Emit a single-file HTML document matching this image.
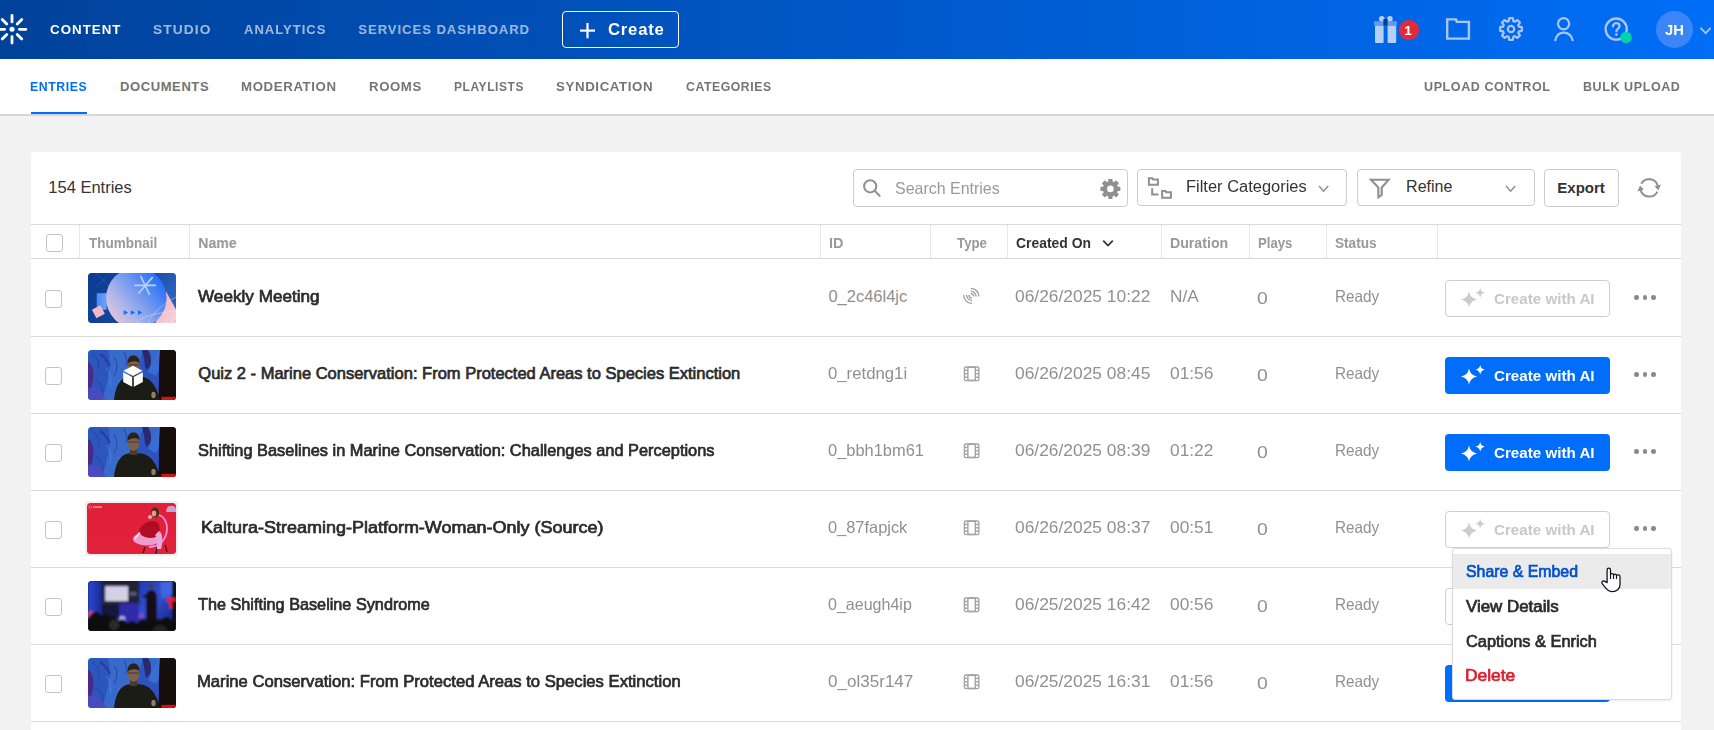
<!DOCTYPE html><html><head><meta charset="utf-8"><title>Entries</title><style>
*{box-sizing:border-box}
html,body{margin:0;padding:0}
body{width:1714px;height:730px;overflow:hidden;position:relative;background:#f2f2f2;font-family:"Liberation Sans",sans-serif}
.t{position:absolute;white-space:nowrap;transform-origin:0 0}
.a{position:absolute}
</style></head><body>
<div class="a" style="left:0;top:0;width:1714px;height:59px;background:linear-gradient(90deg,#00429a 0%,#0058c8 50%,#006ef8 100%)"></div>
<svg class="a" style="left:0;top:0" width="40" height="59"><g stroke="#fff" stroke-width="2.8" stroke-linecap="round"><line x1="19.40" y1="29.30" x2="25.80" y2="29.30"/><line x1="17.23" y1="34.53" x2="21.76" y2="39.06"/><line x1="12.00" y1="36.70" x2="12.00" y2="43.10"/><line x1="6.77" y1="34.53" x2="2.24" y2="39.06"/><line x1="4.60" y1="29.30" x2="-1.80" y2="29.30"/><line x1="6.77" y1="24.07" x2="2.24" y2="19.54"/><line x1="12.00" y1="21.90" x2="12.00" y2="15.50"/><line x1="17.23" y1="24.07" x2="21.76" y2="19.54"/></g><circle cx="12" cy="29.3" r="2.5" fill="#fff"/></svg>
<div class="a" style="left:562px;top:11px;width:117px;height:37px;border:1.4px solid #fff;border-radius:4px"></div>
<svg class="a" style="left:578px;top:21px" width="20" height="20"><g stroke="#fff" stroke-width="2.2"><line x1="2" y1="9.6" x2="17" y2="9.6"/><line x1="9.5" y1="2" x2="9.5" y2="17.3"/></g></svg>
<svg class="a" style="left:1370px;top:12px" width="32" height="34">
<circle cx="11.8" cy="6.9" r="2.8" fill="#b4cff8"/><circle cx="19.9" cy="6.9" r="2.8" fill="#b4cff8"/>
<rect x="4" y="9.3" width="23" height="4.4" rx="1" fill="#5d9cf6"/>
<rect x="5" y="13.7" width="8.6" height="17.3" rx="0.8" fill="#b4cff8"/>
<rect x="17.6" y="13.7" width="8.6" height="17.3" rx="0.8" fill="#b4cff8"/>
<rect x="13.4" y="7" width="4.2" height="6.7" fill="#0b3a8c"/>
</svg>
<div class="a" style="left:1399px;top:20px;width:19.5px;height:19.5px;border-radius:50%;background:#e12a3a"></div>
<svg class="a" style="left:1440px;top:12px" width="36" height="34"><path d="M7.2 7.4 H16 L16.8 9.9 H28.9 V26.6 H7.2 Z" fill="none" stroke="#a9c6f7" stroke-width="2.4" stroke-linejoin="miter"/></svg>
<svg class="a" style="left:1495px;top:13px" width="32" height="32"><path d="M23.84 13.59 L26.85 14.19 L26.85 17.81 L23.84 18.41 L23.25 19.84 L24.95 22.40 L22.40 24.95 L19.84 23.25 L18.41 23.84 L17.81 26.85 L14.19 26.85 L13.59 23.84 L12.16 23.25 L9.60 24.95 L7.05 22.40 L8.75 19.84 L8.16 18.41 L5.15 17.81 L5.15 14.19 L8.16 13.59 L8.75 12.16 L7.05 9.60 L9.60 7.05 L12.16 8.75 L13.59 8.16 L14.19 5.15 L17.81 5.15 L18.41 8.16 L19.84 8.75 L22.40 7.05 L24.95 9.60 L23.25 12.16 Z" fill="none" stroke="#a9c6f7" stroke-width="2.2" stroke-linejoin="round"/><circle cx="16" cy="16" r="3.2" fill="none" stroke="#a9c6f7" stroke-width="2.2"/></svg>
<svg class="a" style="left:1550px;top:13px" width="28" height="30"><circle cx="13.6" cy="10.8" r="5.6" fill="none" stroke="#a9c6f7" stroke-width="2.2"/><path d="M5.3 27.2 C6.5 21.6 9.8 19.6 13.8 19.6 C17.8 19.6 21.1 21.6 22.7 27.2" fill="none" stroke="#a9c6f7" stroke-width="2.2" stroke-linecap="round"/></svg>
<svg class="a" style="left:1600px;top:13px" width="36" height="34"><circle cx="16.2" cy="16.1" r="10.6" fill="none" stroke="#a9c6f7" stroke-width="2.3"/><path d="M12.9 13.4 C12.9 11.2 14.5 10.2 16.3 10.2 C18.2 10.2 19.6 11.4 19.6 13.1 C19.6 15.5 16.4 15.6 16.4 18.3" fill="none" stroke="#a9c6f7" stroke-width="2.2" stroke-linecap="round"/><circle cx="16.4" cy="21.6" r="1.3" fill="#a9c6f7"/><circle cx="26" cy="24.5" r="5.8" fill="#00d4a6"/></svg>
<div class="a" style="left:1656px;top:11px;width:37px;height:37px;border-radius:50%;background:#3b86f6"></div>
<svg class="a" style="left:1696px;top:22px" width="18" height="16"><path d="M4.5 5.8 L9.6 11.2 L14.7 5.8" fill="none" stroke="#a9c6f7" stroke-width="1.8"/></svg>
<div class="a" style="left:0;top:59px;width:1714px;height:55px;background:#fff"></div>
<div class="a" style="left:0;top:114px;width:1714px;height:2px;background:#d7d7d7"></div>
<div class="a" style="left:31px;top:112px;width:56px;height:2px;background:#006efa"></div>
<div class="a" style="left:31px;top:152px;width:1650px;height:600px;background:#fff;border-radius:4px"></div>
<div class="a" style="left:853px;top:169px;width:275px;height:38px;border:1px solid #cccccc;border-radius:4px;background:#fff;"></div>
<div class="a" style="left:1137px;top:169px;width:210px;height:37px;border:1px solid #cccccc;border-radius:4px;background:#fff;"></div>
<div class="a" style="left:1357px;top:169px;width:178px;height:37px;border:1px solid #cccccc;border-radius:4px;background:#fff;"></div>
<div class="a" style="left:1544px;top:169px;width:75px;height:38px;border:1px solid #cccccc;border-radius:4px;background:#fff;"></div>
<svg class="a" style="left:860px;top:176px" width="24" height="24"><circle cx="10.2" cy="10.3" r="6.1" fill="none" stroke="#8f8f8f" stroke-width="2"/><line x1="14.6" y1="14.7" x2="19.6" y2="19.7" stroke="#8f8f8f" stroke-width="2.1" stroke-linecap="round"/></svg>
<svg class="a" style="left:1095px;top:172px" width="32" height="32"><g fill="#8f8f8f"><circle cx="15.4" cy="16.9" r="7.6"/><rect x="13.2" y="6.9" width="4.4" height="4" rx="0.8" transform="rotate(0 15.4 16.9)"/><rect x="13.2" y="6.9" width="4.4" height="4" rx="0.8" transform="rotate(45 15.4 16.9)"/><rect x="13.2" y="6.9" width="4.4" height="4" rx="0.8" transform="rotate(90 15.4 16.9)"/><rect x="13.2" y="6.9" width="4.4" height="4" rx="0.8" transform="rotate(135 15.4 16.9)"/><rect x="13.2" y="6.9" width="4.4" height="4" rx="0.8" transform="rotate(180 15.4 16.9)"/><rect x="13.2" y="6.9" width="4.4" height="4" rx="0.8" transform="rotate(225 15.4 16.9)"/><rect x="13.2" y="6.9" width="4.4" height="4" rx="0.8" transform="rotate(270 15.4 16.9)"/><rect x="13.2" y="6.9" width="4.4" height="4" rx="0.8" transform="rotate(315 15.4 16.9)"/></g><circle cx="15.4" cy="16.9" r="3.3" fill="#fff"/></svg>
<svg class="a" style="left:1140px;top:170px" width="36" height="32"><g fill="none" stroke="#8f8f8f" stroke-width="2"><path d="M8.9 14.8 V8.2 H12.3 L13 9.4 H17.9 V14.8 Z"/><path d="M12.2 18.2 V24.4 H18.5"/><path d="M22.1 27.8 V21.1 H25.5 L26.2 22.3 H30.9 V27.8 Z"/></g></svg>
<svg class="a" style="left:1316px;top:182px" width="16" height="14"><path d="M3 4 L7.6 9.2 L12.2 4" fill="none" stroke="#8f8f8f" stroke-width="1.5"/></svg>
<svg class="a" style="left:1503px;top:182px" width="16" height="14"><path d="M3 4 L7.6 9.2 L12.2 4" fill="none" stroke="#8f8f8f" stroke-width="1.5"/></svg>
<svg class="a" style="left:1366px;top:175px" width="26" height="26"><path d="M5 4.7 H22.6 L15.7 12.6 V20 L12.4 22.2 V12.6 Z" fill="none" stroke="#8f8f8f" stroke-width="2.1" stroke-linejoin="miter"/></svg>
<svg class="a" style="left:1630px;top:170px" width="40" height="35"><g fill="none" stroke="#8f8f8f" stroke-width="2"><path d="M11.25 13.68 A9 9 0 0 1 27.9 16.6"/><path d="M27.4 21.6 A9 9 0 0 1 10.5 19.2"/></g><path d="M24.6 16.2 L30.9 14.4 L28.4 20.2 Z" fill="#8f8f8f"/><path d="M13.8 19.6 L7.5 21.4 L10 15.6 Z" fill="#8f8f8f"/></svg>
<div class="a" style="left:31px;top:224px;width:1650px;height:1px;background:#d9d9d9"></div>
<div class="a" style="left:31px;top:258px;width:1650px;height:1px;background:#d9d9d9"></div>
<div class="a" style="left:79px;top:225px;width:1px;height:33px;background:#e8e8e8"></div>
<div class="a" style="left:189px;top:225px;width:1px;height:33px;background:#e8e8e8"></div>
<div class="a" style="left:820px;top:225px;width:1px;height:33px;background:#e8e8e8"></div>
<div class="a" style="left:930px;top:225px;width:1px;height:33px;background:#e8e8e8"></div>
<div class="a" style="left:1007px;top:225px;width:1px;height:33px;background:#e8e8e8"></div>
<div class="a" style="left:1161px;top:225px;width:1px;height:33px;background:#e8e8e8"></div>
<div class="a" style="left:1249px;top:225px;width:1px;height:33px;background:#e8e8e8"></div>
<div class="a" style="left:1326px;top:225px;width:1px;height:33px;background:#e8e8e8"></div>
<div class="a" style="left:1437px;top:225px;width:1px;height:33px;background:#e8e8e8"></div>
<div class="a" style="left:31px;top:336px;width:1650px;height:1px;background:#d9d9d9"></div>
<div class="a" style="left:31px;top:413px;width:1650px;height:1px;background:#d9d9d9"></div>
<div class="a" style="left:31px;top:490px;width:1650px;height:1px;background:#d9d9d9"></div>
<div class="a" style="left:31px;top:567px;width:1650px;height:1px;background:#d9d9d9"></div>
<div class="a" style="left:31px;top:644px;width:1650px;height:1px;background:#d9d9d9"></div>
<div class="a" style="left:31px;top:721px;width:1650px;height:1px;background:#d9d9d9"></div>
<div class="a" style="left:46px;top:234px;width:17px;height:18px;border:1px solid #c4c4c4;border-radius:3px;background:#fff;"></div>
<svg class="a" style="left:1099px;top:236px" width="18" height="14"><path d="M4.2 4.6 L9 9.6 L13.8 4.6" fill="none" stroke="#333" stroke-width="1.7"/></svg>
<svg class="a" style="left:88px;top:273px" width="88" height="50" viewBox="0 0 88 50"><defs><clipPath id="cw"><rect width="88" height="50" rx="3.5"/></clipPath>
<linearGradient id="gw" x1="0" y1="0" x2="1" y2="0.3"><stop offset="0" stop-color="#0c3a8e"/><stop offset="0.6" stop-color="#1447a4"/><stop offset="1" stop-color="#2d60b8"/></linearGradient>
<linearGradient id="gc" x1="0" y1="0.9" x2="1" y2="0.1"><stop offset="0" stop-color="#f6cad6"/><stop offset="0.3" stop-color="#b0b6ea"/><stop offset="0.62" stop-color="#6492f0"/><stop offset="1" stop-color="#0c60f8"/></linearGradient>
<linearGradient id="gp" x1="0" y1="0" x2="1" y2="1"><stop offset="0" stop-color="#f0a8bc"/><stop offset="1" stop-color="#f8d6de"/></linearGradient>
<linearGradient id="gb" x1="0" y1="0" x2="1" y2="0"><stop offset="0" stop-color="#4a8af8"/><stop offset="1" stop-color="#6aa2f8"/></linearGradient></defs>
<g clip-path="url(#cw)"><rect width="88" height="50" fill="url(#gw)"/>
<g stroke="#3c68b8" stroke-width="0.6" opacity="0.7"><line x1="8" y1="0" x2="22" y2="14"/><line x1="22" y1="0" x2="8" y2="14"/></g>
<path d="M78.3 18.7 L88 36.5 V50 H67.5 Z" fill="url(#gp)"/>
<rect x="8.7" y="20.2" width="10" height="16.6" fill="url(#gb)"/>
<circle cx="48.3" cy="25" r="30.3" fill="url(#gc)"/>
<rect x="5.6" y="34" width="9.6" height="9.6" fill="#f2b8c8" transform="rotate(-28 10.4 38.8)"/>
<g stroke="#bcd2f2" stroke-width="1.6" stroke-linecap="round"><line x1="47.2" y1="12.4" x2="67.2" y2="12.4"/><line x1="52.8" y1="3.4" x2="61.4" y2="21.4"/><line x1="64.2" y1="4.6" x2="50.6" y2="20.2"/></g>
<g fill="#1a6ef5"><path d="M35.7 37.2 l4.4 2.4 l-4.4 2.4z"/><path d="M42.8 37.2 l4.4 2.4 l-4.4 2.4z"/><path d="M50 37.2 l4.4 2.4 l-4.4 2.4z"/></g>
<g fill="none" stroke="#f0e8f8" stroke-width="0.5" opacity="0.8"><path d="M48 50 C56 42 70 40 88 38"/><path d="M60 50 C64 40 76 30 88 24"/></g>
</g></svg>
<svg class="a" style="left:88px;top:350px" width="88" height="50" viewBox="0 0 88 50"><defs><clipPath id="cs1"><rect width="88" height="50" rx="3.5"/></clipPath>
<linearGradient id="gs1" x1="0" y1="0" x2="1" y2="1"><stop offset="0" stop-color="#2a58bc"/><stop offset="1" stop-color="#3050c0"/></linearGradient>
<filter id="fs1" x="-10%" y="-10%" width="120%" height="120%"><feGaussianBlur stdDeviation="0.7"/></filter></defs>
<g clip-path="url(#cs1)"><rect width="88" height="50" fill="url(#gs1)"/>
<g filter="url(#fs1)">
<path d="M20 0 H56 C50 12 46 30 42 50 H14 C20 32 24 14 20 0Z" fill="#3a74d0" opacity="0.7"/><g stroke="#2446a8" stroke-width="1.2" fill="none" opacity="0.8"><path d="M4 4 C10 8 12 14 10 20"/><path d="M26 8 C30 12 30 20 26 26"/><path d="M8 30 C14 34 16 40 14 46"/><path d="M36 2 C38 6 40 12 38 16"/></g><g stroke="#5a90e4" stroke-width="1" fill="none" opacity="0.6"><path d="M18 18 C22 22 24 30 22 36"/><path d="M30 30 C34 34 34 42 32 48"/></g>
<path d="M0 12 C5 14 7 24 4 36 C3 40 1 42 0 42Z" fill="#4a2c88"/>
<path d="M0 38 C8 36 16 42 18 50 H0Z" fill="#5048c0" opacity="0.8"/>
<path d="M12 4 C16 6 20 12 22 16" stroke="#2a3c9a" stroke-width="2" fill="none"/>
<path d="M54 0 H70 C68 8 64 16 58 20 C56 12 56 6 54 0Z" fill="#2c2a70"/>
<path d="M60 0 H76 C74 10 72 20 68 26 L60 22 C64 14 64 6 60 0Z" fill="#3a70d4" opacity="0.9"/>
<path d="M72 0 H88 V50 H70 C72 36 70 24 72 0Z" fill="#15110c"/>
<path d="M26 50 C27 40 30 31 37 27.5 C43 25.5 53 25.5 59 28.5 C66 32 70 42 72 50Z" fill="#1b1a16"/>
<rect x="42" y="20" width="7" height="8" fill="#4a3a30"/><ellipse cx="45.5" cy="16.2" rx="5.8" ry="7.6" fill="#7a6050"/><path d="M40.5 15 H50.5" stroke="#3a2a22" stroke-width="0.8"/>
<path d="M39.5 14 C39.5 8 42 5.5 45.5 5.5 C49 5.5 51.6 8 51.4 13 C49 10.5 42 10.5 39.5 14Z" fill="#2a2018"/>
<ellipse cx="65.5" cy="45" rx="2.2" ry="3.2" fill="#9a7a66"/>
</g>
<rect x="73.4" y="46.8" width="15" height="3.5" fill="#d81010"/>
</g></svg>
<svg class="a" style="left:121px;top:363px" width="24" height="25" viewBox="0 0 24 24"><path d="M12 2.2 L21.6 7.3 L12 12.4 L2.4 7.3 Z" fill="#fff"/><path d="M2.2 8.8 L11.2 13.6 V23.2 L2.2 18.4 Z" fill="#fff"/><path d="M12.8 13.6 L21.8 8.8 V18.4 L12.8 23.2 Z" fill="#fff"/></svg>
<svg class="a" style="left:88px;top:427px" width="88" height="50" viewBox="0 0 88 50"><defs><clipPath id="cs2"><rect width="88" height="50" rx="3.5"/></clipPath>
<linearGradient id="gs2" x1="0" y1="0" x2="1" y2="1"><stop offset="0" stop-color="#2a58bc"/><stop offset="1" stop-color="#3050c0"/></linearGradient>
<filter id="fs2" x="-10%" y="-10%" width="120%" height="120%"><feGaussianBlur stdDeviation="0.7"/></filter></defs>
<g clip-path="url(#cs2)"><rect width="88" height="50" fill="url(#gs2)"/>
<g filter="url(#fs2)">
<path d="M20 0 H56 C50 12 46 30 42 50 H14 C20 32 24 14 20 0Z" fill="#3a74d0" opacity="0.7"/><g stroke="#2446a8" stroke-width="1.2" fill="none" opacity="0.8"><path d="M4 4 C10 8 12 14 10 20"/><path d="M26 8 C30 12 30 20 26 26"/><path d="M8 30 C14 34 16 40 14 46"/><path d="M36 2 C38 6 40 12 38 16"/></g><g stroke="#5a90e4" stroke-width="1" fill="none" opacity="0.6"><path d="M18 18 C22 22 24 30 22 36"/><path d="M30 30 C34 34 34 42 32 48"/></g>
<path d="M0 12 C5 14 7 24 4 36 C3 40 1 42 0 42Z" fill="#4a2c88"/>
<path d="M0 38 C8 36 16 42 18 50 H0Z" fill="#5048c0" opacity="0.8"/>
<path d="M12 4 C16 6 20 12 22 16" stroke="#2a3c9a" stroke-width="2" fill="none"/>
<path d="M54 0 H70 C68 8 64 16 58 20 C56 12 56 6 54 0Z" fill="#2c2a70"/>
<path d="M60 0 H76 C74 10 72 20 68 26 L60 22 C64 14 64 6 60 0Z" fill="#3a70d4" opacity="0.9"/>
<path d="M72 0 H88 V50 H70 C72 36 70 24 72 0Z" fill="#15110c"/>
<path d="M26 50 C27 40 30 31 37 27.5 C43 25.5 53 25.5 59 28.5 C66 32 70 42 72 50Z" fill="#1b1a16"/>
<rect x="42" y="20" width="7" height="8" fill="#4a3a30"/><ellipse cx="45.5" cy="16.2" rx="5.8" ry="7.6" fill="#7a6050"/><path d="M40.5 15 H50.5" stroke="#3a2a22" stroke-width="0.8"/>
<path d="M39.5 14 C39.5 8 42 5.5 45.5 5.5 C49 5.5 51.6 8 51.4 13 C49 10.5 42 10.5 39.5 14Z" fill="#2a2018"/>
<ellipse cx="65.5" cy="45" rx="2.2" ry="3.2" fill="#9a7a66"/>
</g>
<rect x="73.4" y="46.8" width="15" height="3.5" fill="#d81010"/>
</g></svg>
<div class="a" style="left:85px;top:501px;width:93px;height:55px;background:#eef0f0;border-radius:2px"></div>
<svg class="a" style="left:87px;top:503px" width="89" height="51" viewBox="0 0 89 51"><defs><clipPath id="cr"><rect width="89" height="51" rx="3.5"/></clipPath>
<linearGradient id="gr" x1="0" y1="0" x2="0" y2="1"><stop offset="0" stop-color="#df2038"/><stop offset="1" stop-color="#e2223a"/></linearGradient>
<filter id="fr" x="-10%" y="-10%" width="120%" height="120%"><feGaussianBlur stdDeviation="0.6"/></filter></defs>
<g clip-path="url(#cr)"><rect width="89" height="51" fill="url(#gr)"/>
<circle cx="3.2" cy="4" r="1.4" fill="none" stroke="#f4a0a8" stroke-width="0.5"/>
<rect x="6" y="3.4" width="9" height="1.4" fill="#f8c8cc" opacity="0.75"/>
<g filter="url(#fr)">
<path d="M80 5 C82 2 88 2 89 6 V9 H79Z" fill="#c8a4d4"/>
<path d="M70 44 L69 51 M58 44 L56 50 M78 42 L80 49" stroke="#3a0e14" stroke-width="1.2"/>
<ellipse cx="60" cy="36" rx="14" ry="6.5" fill="#f0a8dc" opacity="0.9"/>
<path d="M48 36 C52 28 58 26 62 30 C66 32 70 34 74 36" stroke="#ffe4f8" stroke-width="1.6" fill="none"/>
<path d="M72 12 C78 14 82 22 79 32 C76 40 70 44 62 44" stroke="#e890e0" stroke-width="1.8" fill="none"/>
<path d="M52 27 C54 22 60 18 66 18 C72 18 74 24 72 32 C68 36 60 36 54 32Z" fill="#b00e22"/>
<path d="M72 28 C76 30 76 40 74 46 L70 46 C70 40 70 34 68 32Z" fill="#e8a8e0"/>
<ellipse cx="68" cy="9.5" rx="4" ry="5" fill="#4a2a1e"/>
<ellipse cx="67" cy="10.6" rx="2.3" ry="3" fill="#d8a088"/>
<circle cx="63" cy="14" r="2" fill="#f8e0f0" opacity="0.7"/>
</g>
</g></svg>
<svg class="a" style="left:88px;top:581px" width="88" height="50" viewBox="0 0 88 50"><defs><clipPath id="cs"><rect width="88" height="50" rx="3.5"/></clipPath>
<linearGradient id="gsl" x1="0" y1="0" x2="1" y2="0"><stop offset="0" stop-color="#2a48d8"/><stop offset="1" stop-color="#1c2a90"/></linearGradient>
<linearGradient id="gsr" x1="0" y1="0" x2="1" y2="1"><stop offset="0" stop-color="#2038b0"/><stop offset="0.5" stop-color="#3050d0"/><stop offset="1" stop-color="#1c2a90"/></linearGradient>
<filter id="fs" x="-10%" y="-10%" width="120%" height="120%"><feGaussianBlur stdDeviation="0.9"/></filter></defs>
<g clip-path="url(#cs)"><rect width="88" height="50" fill="#17173c"/>
<g filter="url(#fs)">
<rect x="0" y="0" width="14" height="38" fill="url(#gsl)"/>
<path d="M50 0 H84 V38 H50 Z" fill="url(#gsr)"/>
<path d="M72 2 L84 0 V14 L74 18Z" fill="#4a70e8" opacity="0.7"/>
<path d="M84 0 H88 V50 H84Z" fill="#0e0c10"/>
<rect x="14.3" y="1" width="37" height="23" fill="#242036"/>
<rect x="17.2" y="5.2" width="22.8" height="14.8" fill="#d4d0e6"/>
<rect x="41.5" y="11" width="7" height="3.5" fill="#6a6890" opacity="0.8"/>
<path d="M31 22 H50 L52 42 H31Z" fill="#2d2aa8"/>
<ellipse cx="34" cy="38" rx="3.5" ry="3" fill="#b8c0ff" opacity="0.9"/>
<ellipse cx="53" cy="35" rx="2.5" ry="3" fill="#a050c8" opacity="0.7"/>
<path d="M58 50 V18 C58 12 60 9 63.5 9 C67 9 69 12 69 18 V50Z" fill="#131118"/>
<path d="M55 16 C58 14 61 15 63 18" stroke="#131118" stroke-width="2.5" fill="none"/>
<circle cx="63.5" cy="5.5" r="2.6" fill="#4a3a36"/>
<path d="M78.5 17 H88 V20.5 H84.5 V27 H81.5 V20.5 H78.5Z" fill="#ee1c1c"/>
<circle cx="3" cy="34" r="4" fill="#d84a80" opacity="0.85"/>
<path d="M0 38 C4 30 10 28 13 35 C15 31 19 31 21 37 C23 35 27 35 29 41 C33 37 37 37 39 43 C41 39 47 39 49 43 C53 37 58 39 60 43 C64 36 70 36 72 41 C76 34 81 35 84 40 L88 40 V50 H0Z" fill="#0d0c10"/>
<ellipse cx="26" cy="44" rx="5" ry="5" fill="#2e2c2a"/>
<ellipse cx="72" cy="48" rx="7" ry="4" fill="#242220"/>
</g>
</g></svg>
<svg class="a" style="left:88px;top:658px" width="88" height="50" viewBox="0 0 88 50"><defs><clipPath id="cs5"><rect width="88" height="50" rx="3.5"/></clipPath>
<linearGradient id="gs5" x1="0" y1="0" x2="1" y2="1"><stop offset="0" stop-color="#2a58bc"/><stop offset="1" stop-color="#3050c0"/></linearGradient>
<filter id="fs5" x="-10%" y="-10%" width="120%" height="120%"><feGaussianBlur stdDeviation="0.7"/></filter></defs>
<g clip-path="url(#cs5)"><rect width="88" height="50" fill="url(#gs5)"/>
<g filter="url(#fs5)">
<path d="M20 0 H56 C50 12 46 30 42 50 H14 C20 32 24 14 20 0Z" fill="#3a74d0" opacity="0.7"/><g stroke="#2446a8" stroke-width="1.2" fill="none" opacity="0.8"><path d="M4 4 C10 8 12 14 10 20"/><path d="M26 8 C30 12 30 20 26 26"/><path d="M8 30 C14 34 16 40 14 46"/><path d="M36 2 C38 6 40 12 38 16"/></g><g stroke="#5a90e4" stroke-width="1" fill="none" opacity="0.6"><path d="M18 18 C22 22 24 30 22 36"/><path d="M30 30 C34 34 34 42 32 48"/></g>
<path d="M0 12 C5 14 7 24 4 36 C3 40 1 42 0 42Z" fill="#4a2c88"/>
<path d="M0 38 C8 36 16 42 18 50 H0Z" fill="#5048c0" opacity="0.8"/>
<path d="M12 4 C16 6 20 12 22 16" stroke="#2a3c9a" stroke-width="2" fill="none"/>
<path d="M54 0 H70 C68 8 64 16 58 20 C56 12 56 6 54 0Z" fill="#2c2a70"/>
<path d="M60 0 H76 C74 10 72 20 68 26 L60 22 C64 14 64 6 60 0Z" fill="#3a70d4" opacity="0.9"/>
<path d="M72 0 H88 V50 H70 C72 36 70 24 72 0Z" fill="#15110c"/>
<path d="M26 50 C27 40 30 31 37 27.5 C43 25.5 53 25.5 59 28.5 C66 32 70 42 72 50Z" fill="#1b1a16"/>
<rect x="42" y="20" width="7" height="8" fill="#4a3a30"/><ellipse cx="45.5" cy="16.2" rx="5.8" ry="7.6" fill="#7a6050"/><path d="M40.5 15 H50.5" stroke="#3a2a22" stroke-width="0.8"/>
<path d="M39.5 14 C39.5 8 42 5.5 45.5 5.5 C49 5.5 51.6 8 51.4 13 C49 10.5 42 10.5 39.5 14Z" fill="#2a2018"/>
<ellipse cx="65.5" cy="45" rx="2.2" ry="3.2" fill="#9a7a66"/>
</g>
<rect x="73.4" y="46.8" width="15" height="3.5" fill="#d81010"/>
</g></svg>
<div class="a" style="left:45px;top:290px;width:17px;height:18px;border:1px solid #c4c4c4;border-radius:3px;background:#fff;"></div>
<svg class="a" style="left:958px;top:283px" width="28" height="26"><g fill="none" stroke="#9a9a9a" stroke-width="1.3"><path d="M12.8 10.5 A3 3 0 0 1 15.8 13.5"/><path d="M12.8 8.2 A5.3 5.3 0 0 1 18.1 13.5"/><path d="M12.8 5.3 A8.2 8.2 0 0 1 21 13.5"/><path d="M10.9 12.1 A3 3 0 0 0 13.9 15.1"/><path d="M8.6 12.1 A5.3 5.3 0 0 0 13.9 17.4"/><path d="M5.7 12.1 A8.2 8.2 0 0 0 13.9 20.3"/></g></svg>
<div class="a" style="left:1445px;top:280px;width:165px;height:37px;border:1px solid #cfcfcf;border-radius:4px;background:#fff;"></div>
<svg class="a" style="left:1458px;top:285px" width="30" height="26"><path d="M11 6.5 Q12.296 13.304 19.1 14.6 Q12.296 15.895999999999999 11 22.7 Q9.704 15.895999999999999 2.9000000000000004 14.6 Q9.704 13.304 11 6.5 Z" fill="#cccccc"/><path d="M22.2 3.0 Q22.951999999999998 6.948 26.9 7.7 Q22.951999999999998 8.452 22.2 12.4 Q21.448 8.452 17.5 7.7 Q21.448 6.948 22.2 3.0 Z" fill="#cccccc"/></svg>
<div class="a" style="left:1634.0px;top:295.1px;width:4.6px;height:4.6px;border-radius:50%;background:#8a8a8a"></div>
<div class="a" style="left:1642.7px;top:295.1px;width:4.6px;height:4.6px;border-radius:50%;background:#8a8a8a"></div>
<div class="a" style="left:1651.4px;top:295.1px;width:4.6px;height:4.6px;border-radius:50%;background:#8a8a8a"></div>
<div class="a" style="left:45px;top:367px;width:17px;height:18px;border:1px solid #c4c4c4;border-radius:3px;background:#fff;"></div>
<svg class="a" style="left:962px;top:365px" width="20" height="18"><g fill="none" stroke="#a4a4a4" stroke-width="1.4"><rect x="2.4" y="2" width="14.4" height="13.6" rx="1.4"/><line x1="5.9" y1="2" x2="5.9" y2="15.6"/><line x1="13.3" y1="2" x2="13.3" y2="15.6"/><line x1="2.4" y1="5.4" x2="5.9" y2="5.4"/><line x1="2.4" y1="8.8" x2="5.9" y2="8.8"/><line x1="2.4" y1="12.2" x2="5.9" y2="12.2"/><line x1="13.3" y1="5.4" x2="16.8" y2="5.4"/><line x1="13.3" y1="8.8" x2="16.8" y2="8.8"/><line x1="13.3" y1="12.2" x2="16.8" y2="12.2"/></g><line x1="5.9" y1="2.2" x2="13.3" y2="2.2" stroke="#a4a4a4" stroke-width="1.6"/><line x1="5.9" y1="15.4" x2="13.3" y2="15.4" stroke="#a4a4a4" stroke-width="1.6"/></svg>
<div class="a" style="left:1445px;top:357px;width:165px;height:37px;background:#006efa;border-radius:4px"></div>
<svg class="a" style="left:1458px;top:362px" width="30" height="26"><path d="M11 6.5 Q12.296 13.304 19.1 14.6 Q12.296 15.895999999999999 11 22.7 Q9.704 15.895999999999999 2.9000000000000004 14.6 Q9.704 13.304 11 6.5 Z" fill="#ffffff"/><path d="M22.2 3.0 Q22.951999999999998 6.948 26.9 7.7 Q22.951999999999998 8.452 22.2 12.4 Q21.448 8.452 17.5 7.7 Q21.448 6.948 22.2 3.0 Z" fill="#ffffff"/></svg>
<div class="a" style="left:1634.0px;top:372.1px;width:4.6px;height:4.6px;border-radius:50%;background:#8a8a8a"></div>
<div class="a" style="left:1642.7px;top:372.1px;width:4.6px;height:4.6px;border-radius:50%;background:#8a8a8a"></div>
<div class="a" style="left:1651.4px;top:372.1px;width:4.6px;height:4.6px;border-radius:50%;background:#8a8a8a"></div>
<div class="a" style="left:45px;top:444px;width:17px;height:18px;border:1px solid #c4c4c4;border-radius:3px;background:#fff;"></div>
<svg class="a" style="left:962px;top:442px" width="20" height="18"><g fill="none" stroke="#a4a4a4" stroke-width="1.4"><rect x="2.4" y="2" width="14.4" height="13.6" rx="1.4"/><line x1="5.9" y1="2" x2="5.9" y2="15.6"/><line x1="13.3" y1="2" x2="13.3" y2="15.6"/><line x1="2.4" y1="5.4" x2="5.9" y2="5.4"/><line x1="2.4" y1="8.8" x2="5.9" y2="8.8"/><line x1="2.4" y1="12.2" x2="5.9" y2="12.2"/><line x1="13.3" y1="5.4" x2="16.8" y2="5.4"/><line x1="13.3" y1="8.8" x2="16.8" y2="8.8"/><line x1="13.3" y1="12.2" x2="16.8" y2="12.2"/></g><line x1="5.9" y1="2.2" x2="13.3" y2="2.2" stroke="#a4a4a4" stroke-width="1.6"/><line x1="5.9" y1="15.4" x2="13.3" y2="15.4" stroke="#a4a4a4" stroke-width="1.6"/></svg>
<div class="a" style="left:1445px;top:434px;width:165px;height:37px;background:#006efa;border-radius:4px"></div>
<svg class="a" style="left:1458px;top:439px" width="30" height="26"><path d="M11 6.5 Q12.296 13.304 19.1 14.6 Q12.296 15.895999999999999 11 22.7 Q9.704 15.895999999999999 2.9000000000000004 14.6 Q9.704 13.304 11 6.5 Z" fill="#ffffff"/><path d="M22.2 3.0 Q22.951999999999998 6.948 26.9 7.7 Q22.951999999999998 8.452 22.2 12.4 Q21.448 8.452 17.5 7.7 Q21.448 6.948 22.2 3.0 Z" fill="#ffffff"/></svg>
<div class="a" style="left:1634.0px;top:449.1px;width:4.6px;height:4.6px;border-radius:50%;background:#8a8a8a"></div>
<div class="a" style="left:1642.7px;top:449.1px;width:4.6px;height:4.6px;border-radius:50%;background:#8a8a8a"></div>
<div class="a" style="left:1651.4px;top:449.1px;width:4.6px;height:4.6px;border-radius:50%;background:#8a8a8a"></div>
<div class="a" style="left:45px;top:521px;width:17px;height:18px;border:1px solid #c4c4c4;border-radius:3px;background:#fff;"></div>
<svg class="a" style="left:962px;top:519px" width="20" height="18"><g fill="none" stroke="#a4a4a4" stroke-width="1.4"><rect x="2.4" y="2" width="14.4" height="13.6" rx="1.4"/><line x1="5.9" y1="2" x2="5.9" y2="15.6"/><line x1="13.3" y1="2" x2="13.3" y2="15.6"/><line x1="2.4" y1="5.4" x2="5.9" y2="5.4"/><line x1="2.4" y1="8.8" x2="5.9" y2="8.8"/><line x1="2.4" y1="12.2" x2="5.9" y2="12.2"/><line x1="13.3" y1="5.4" x2="16.8" y2="5.4"/><line x1="13.3" y1="8.8" x2="16.8" y2="8.8"/><line x1="13.3" y1="12.2" x2="16.8" y2="12.2"/></g><line x1="5.9" y1="2.2" x2="13.3" y2="2.2" stroke="#a4a4a4" stroke-width="1.6"/><line x1="5.9" y1="15.4" x2="13.3" y2="15.4" stroke="#a4a4a4" stroke-width="1.6"/></svg>
<div class="a" style="left:1445px;top:511px;width:165px;height:37px;border:1px solid #cfcfcf;border-radius:4px;background:#fff;"></div>
<svg class="a" style="left:1458px;top:516px" width="30" height="26"><path d="M11 6.5 Q12.296 13.304 19.1 14.6 Q12.296 15.895999999999999 11 22.7 Q9.704 15.895999999999999 2.9000000000000004 14.6 Q9.704 13.304 11 6.5 Z" fill="#cccccc"/><path d="M22.2 3.0 Q22.951999999999998 6.948 26.9 7.7 Q22.951999999999998 8.452 22.2 12.4 Q21.448 8.452 17.5 7.7 Q21.448 6.948 22.2 3.0 Z" fill="#cccccc"/></svg>
<div class="a" style="left:1634.0px;top:526.1px;width:4.6px;height:4.6px;border-radius:50%;background:#8a8a8a"></div>
<div class="a" style="left:1642.7px;top:526.1px;width:4.6px;height:4.6px;border-radius:50%;background:#8a8a8a"></div>
<div class="a" style="left:1651.4px;top:526.1px;width:4.6px;height:4.6px;border-radius:50%;background:#8a8a8a"></div>
<div class="a" style="left:45px;top:598px;width:17px;height:18px;border:1px solid #c4c4c4;border-radius:3px;background:#fff;"></div>
<svg class="a" style="left:962px;top:596px" width="20" height="18"><g fill="none" stroke="#a4a4a4" stroke-width="1.4"><rect x="2.4" y="2" width="14.4" height="13.6" rx="1.4"/><line x1="5.9" y1="2" x2="5.9" y2="15.6"/><line x1="13.3" y1="2" x2="13.3" y2="15.6"/><line x1="2.4" y1="5.4" x2="5.9" y2="5.4"/><line x1="2.4" y1="8.8" x2="5.9" y2="8.8"/><line x1="2.4" y1="12.2" x2="5.9" y2="12.2"/><line x1="13.3" y1="5.4" x2="16.8" y2="5.4"/><line x1="13.3" y1="8.8" x2="16.8" y2="8.8"/><line x1="13.3" y1="12.2" x2="16.8" y2="12.2"/></g><line x1="5.9" y1="2.2" x2="13.3" y2="2.2" stroke="#a4a4a4" stroke-width="1.6"/><line x1="5.9" y1="15.4" x2="13.3" y2="15.4" stroke="#a4a4a4" stroke-width="1.6"/></svg>
<div class="a" style="left:1445px;top:588px;width:165px;height:37px;border:1px solid #cfcfcf;border-radius:4px;background:#fff;"></div>
<svg class="a" style="left:1458px;top:593px" width="30" height="26"><path d="M11 6.5 Q12.296 13.304 19.1 14.6 Q12.296 15.895999999999999 11 22.7 Q9.704 15.895999999999999 2.9000000000000004 14.6 Q9.704 13.304 11 6.5 Z" fill="#cccccc"/><path d="M22.2 3.0 Q22.951999999999998 6.948 26.9 7.7 Q22.951999999999998 8.452 22.2 12.4 Q21.448 8.452 17.5 7.7 Q21.448 6.948 22.2 3.0 Z" fill="#cccccc"/></svg>
<div class="a" style="left:1634.0px;top:603.1px;width:4.6px;height:4.6px;border-radius:50%;background:#8a8a8a"></div>
<div class="a" style="left:1642.7px;top:603.1px;width:4.6px;height:4.6px;border-radius:50%;background:#8a8a8a"></div>
<div class="a" style="left:1651.4px;top:603.1px;width:4.6px;height:4.6px;border-radius:50%;background:#8a8a8a"></div>
<div class="a" style="left:45px;top:675px;width:17px;height:18px;border:1px solid #c4c4c4;border-radius:3px;background:#fff;"></div>
<svg class="a" style="left:962px;top:673px" width="20" height="18"><g fill="none" stroke="#a4a4a4" stroke-width="1.4"><rect x="2.4" y="2" width="14.4" height="13.6" rx="1.4"/><line x1="5.9" y1="2" x2="5.9" y2="15.6"/><line x1="13.3" y1="2" x2="13.3" y2="15.6"/><line x1="2.4" y1="5.4" x2="5.9" y2="5.4"/><line x1="2.4" y1="8.8" x2="5.9" y2="8.8"/><line x1="2.4" y1="12.2" x2="5.9" y2="12.2"/><line x1="13.3" y1="5.4" x2="16.8" y2="5.4"/><line x1="13.3" y1="8.8" x2="16.8" y2="8.8"/><line x1="13.3" y1="12.2" x2="16.8" y2="12.2"/></g><line x1="5.9" y1="2.2" x2="13.3" y2="2.2" stroke="#a4a4a4" stroke-width="1.6"/><line x1="5.9" y1="15.4" x2="13.3" y2="15.4" stroke="#a4a4a4" stroke-width="1.6"/></svg>
<div class="a" style="left:1445px;top:665px;width:165px;height:37px;background:#006efa;border-radius:4px"></div>
<svg class="a" style="left:1458px;top:670px" width="30" height="26"><path d="M11 6.5 Q12.296 13.304 19.1 14.6 Q12.296 15.895999999999999 11 22.7 Q9.704 15.895999999999999 2.9000000000000004 14.6 Q9.704 13.304 11 6.5 Z" fill="#ffffff"/><path d="M22.2 3.0 Q22.951999999999998 6.948 26.9 7.7 Q22.951999999999998 8.452 22.2 12.4 Q21.448 8.452 17.5 7.7 Q21.448 6.948 22.2 3.0 Z" fill="#ffffff"/></svg>
<div class="a" style="left:1634.0px;top:680.1px;width:4.6px;height:4.6px;border-radius:50%;background:#8a8a8a"></div>
<div class="a" style="left:1642.7px;top:680.1px;width:4.6px;height:4.6px;border-radius:50%;background:#8a8a8a"></div>
<div class="a" style="left:1651.4px;top:680.1px;width:4.6px;height:4.6px;border-radius:50%;background:#8a8a8a"></div>
<div class="a" style="left:1452px;top:548px;width:220px;height:152px;background:#fff;border:1px solid #dcdcdc;border-radius:3px;box-shadow:0 1px 3px rgba(0,0,0,0.08);z-index:10"></div>
<div class="a" style="left:1453px;top:553.5px;width:218px;height:35px;background:#ebebeb;z-index:10"></div>
<div class="t" style="left:49.60px;top:22.60px;font-size:13px;line-height:13px;font-weight:700;color:#ffffff;letter-spacing:1.0px;transform:scaleX(1.0232);">CONTENT</div>
<div class="t" style="left:153.04px;top:22.60px;font-size:13px;line-height:13px;font-weight:700;color:rgba(255,255,255,0.62);letter-spacing:1.0px;transform:scaleX(1.0604);">STUDIO</div>
<div class="t" style="left:244.40px;top:22.60px;font-size:13px;line-height:13px;font-weight:700;color:rgba(255,255,255,0.62);letter-spacing:1.0px;transform:scaleX(1.0037);">ANALYTICS</div>
<div class="t" style="left:358.30px;top:22.60px;font-size:13px;line-height:13px;font-weight:700;color:rgba(255,255,255,0.62);letter-spacing:1.0px;">SERVICES DASHBOARD</div>
<div class="t" style="left:608.09px;top:21.23px;font-size:16.5px;line-height:16.5px;font-weight:700;color:#ffffff;letter-spacing:0.8px;transform:scaleX(1.0093);">Create</div>
<div class="t" style="left:1665.40px;top:22.30px;font-size:15px;line-height:15px;font-weight:700;color:#ffffff;letter-spacing:0px;transform:scaleX(0.9833);">JH</div>
<div class="t" style="left:1404.50px;top:23.50px;font-size:13px;line-height:13px;font-weight:700;color:#ffffff;letter-spacing:0px;">1</div>
<div class="t" style="left:30.05px;top:80.00px;font-size:13px;line-height:13px;font-weight:700;color:#006efa;letter-spacing:0.6px;transform:scaleX(0.9458);">ENTRIES</div>
<div class="t" style="left:120.00px;top:80.00px;font-size:13px;line-height:13px;font-weight:700;color:#747474;letter-spacing:0.6px;">DOCUMENTS</div>
<div class="t" style="left:241.38px;top:80.00px;font-size:13px;line-height:13px;font-weight:700;color:#747474;letter-spacing:0.6px;transform:scaleX(1.0196);">MODERATION</div>
<div class="t" style="left:369.19px;top:80.00px;font-size:13px;line-height:13px;font-weight:700;color:#747474;letter-spacing:0.6px;transform:scaleX(1.0140);">ROOMS</div>
<div class="t" style="left:454.38px;top:80.00px;font-size:13px;line-height:13px;font-weight:700;color:#747474;letter-spacing:0.6px;transform:scaleX(0.9243);">PLAYLISTS</div>
<div class="t" style="left:556.38px;top:80.00px;font-size:13px;line-height:13px;font-weight:700;color:#747474;letter-spacing:0.6px;transform:scaleX(1.0215);">SYNDICATION</div>
<div class="t" style="left:686.10px;top:80.00px;font-size:13px;line-height:13px;font-weight:700;color:#747474;letter-spacing:0.6px;transform:scaleX(0.9411);">CATEGORIES</div>
<div class="t" style="left:1423.74px;top:80.00px;font-size:13px;line-height:13px;font-weight:700;color:#747474;letter-spacing:0.6px;transform:scaleX(0.9646);">UPLOAD CONTROL</div>
<div class="t" style="left:1583.44px;top:80.00px;font-size:13px;line-height:13px;font-weight:700;color:#747474;letter-spacing:0.6px;transform:scaleX(0.9626);">BULK UPLOAD</div>
<div class="t" style="left:48.30px;top:179.03px;font-size:16.5px;line-height:16.5px;font-weight:400;color:#333333;letter-spacing:0px;">154 Entries</div>
<div class="t" style="left:895.33px;top:179.83px;font-size:16.5px;line-height:16.5px;font-weight:400;color:#999999;letter-spacing:0px;transform:scaleX(0.9673);">Search Entries</div>
<div class="t" style="left:1186.47px;top:178.56px;font-size:16px;line-height:16px;font-weight:400;color:#333333;letter-spacing:0px;transform:scaleX(1.0284);">Filter Categories</div>
<div class="t" style="left:1406.10px;top:179.16px;font-size:16px;line-height:16px;font-weight:400;color:#333333;letter-spacing:0px;">Refine</div>
<div class="t" style="left:1557.30px;top:180.00px;font-size:15px;line-height:15px;font-weight:700;color:#333333;letter-spacing:0px;">Export</div>
<div class="t" style="left:89.20px;top:235.85px;font-size:14px;line-height:14px;font-weight:700;color:#999999;letter-spacing:0px;transform:scaleX(0.9629);">Thumbnail</div>
<div class="t" style="left:198.30px;top:236.05px;font-size:14px;line-height:14px;font-weight:700;color:#999999;letter-spacing:0px;">Name</div>
<div class="t" style="left:829.17px;top:236.05px;font-size:14px;line-height:14px;font-weight:700;color:#999999;letter-spacing:0px;transform:scaleX(1.0308);">ID</div>
<div class="t" style="left:956.50px;top:236.05px;font-size:14px;line-height:14px;font-weight:700;color:#999999;letter-spacing:0px;transform:scaleX(0.9484);">Type</div>
<div class="t" style="left:1015.91px;top:236.05px;font-size:14px;line-height:14px;font-weight:700;color:#333333;letter-spacing:0px;transform:scaleX(0.9932);">Created On</div>
<div class="t" style="left:1169.89px;top:236.05px;font-size:14px;line-height:14px;font-weight:700;color:#999999;letter-spacing:0px;transform:scaleX(1.0107);">Duration</div>
<div class="t" style="left:1258.16px;top:236.05px;font-size:14px;line-height:14px;font-weight:700;color:#999999;letter-spacing:0px;transform:scaleX(0.9371);">Plays</div>
<div class="t" style="left:1334.73px;top:236.05px;font-size:14px;line-height:14px;font-weight:700;color:#999999;letter-spacing:0px;transform:scaleX(0.9732);">Status</div>
<div class="t" style="left:198.20px;top:288.43px;font-size:16.5px;line-height:16.5px;font-weight:400;color:#2b2b2b;letter-spacing:0px;transform:scaleX(1.0385);-webkit-text-stroke:0.7px #2b2b2b;">Weekly Meeting</div>
<div class="t" style="left:828.40px;top:287.83px;font-size:16.5px;line-height:16.5px;font-weight:400;color:#909090;letter-spacing:0px;">0_2c46l4jc</div>
<div class="t" style="left:1014.95px;top:287.83px;font-size:16.5px;line-height:16.5px;font-weight:400;color:#909090;letter-spacing:0px;transform:scaleX(1.0535);">06/26/2025 10:22</div>
<div class="t" style="left:1169.55px;top:287.83px;font-size:16.5px;line-height:16.5px;font-weight:400;color:#909090;letter-spacing:0px;transform:scaleX(1.0481);">N/A</div>
<div class="t" style="left:1257.23px;top:290.43px;font-size:16.5px;line-height:16.5px;font-weight:400;color:#909090;letter-spacing:0px;transform:scaleX(1.1750);">0</div>
<div class="t" style="left:1335.17px;top:287.83px;font-size:16.5px;line-height:16.5px;font-weight:400;color:#909090;letter-spacing:0px;transform:scaleX(0.9277);">Ready</div>
<div class="t" style="left:198.30px;top:365.43px;font-size:16.5px;line-height:16.5px;font-weight:400;color:#2b2b2b;letter-spacing:0px;-webkit-text-stroke:0.7px #2b2b2b;">Quiz 2 - Marine Conservation: From Protected Areas to Species Extinction</div>
<div class="t" style="left:828.39px;top:364.83px;font-size:16.5px;line-height:16.5px;font-weight:400;color:#909090;letter-spacing:0px;transform:scaleX(1.0145);">0_retdng1i</div>
<div class="t" style="left:1014.95px;top:364.83px;font-size:16.5px;line-height:16.5px;font-weight:400;color:#909090;letter-spacing:0px;transform:scaleX(1.0535);">06/26/2025 08:45</div>
<div class="t" style="left:1169.55px;top:364.83px;font-size:16.5px;line-height:16.5px;font-weight:400;color:#909090;letter-spacing:0px;transform:scaleX(1.0500);">01:56</div>
<div class="t" style="left:1257.23px;top:367.43px;font-size:16.5px;line-height:16.5px;font-weight:400;color:#909090;letter-spacing:0px;transform:scaleX(1.1750);">0</div>
<div class="t" style="left:1335.17px;top:364.83px;font-size:16.5px;line-height:16.5px;font-weight:400;color:#909090;letter-spacing:0px;transform:scaleX(0.9277);">Ready</div>
<div class="t" style="left:198.30px;top:442.43px;font-size:16.5px;line-height:16.5px;font-weight:400;color:#2b2b2b;letter-spacing:0px;transform:scaleX(0.9914);-webkit-text-stroke:0.7px #2b2b2b;">Shifting Baselines in Marine Conservation: Challenges and Perceptions</div>
<div class="t" style="left:828.40px;top:441.83px;font-size:16.5px;line-height:16.5px;font-weight:400;color:#909090;letter-spacing:0px;transform:scaleX(0.9958);">0_bbh1bm61</div>
<div class="t" style="left:1014.95px;top:441.83px;font-size:16.5px;line-height:16.5px;font-weight:400;color:#909090;letter-spacing:0px;transform:scaleX(1.0535);">06/26/2025 08:39</div>
<div class="t" style="left:1169.55px;top:441.83px;font-size:16.5px;line-height:16.5px;font-weight:400;color:#909090;letter-spacing:0px;transform:scaleX(1.0500);">01:22</div>
<div class="t" style="left:1257.23px;top:444.43px;font-size:16.5px;line-height:16.5px;font-weight:400;color:#909090;letter-spacing:0px;transform:scaleX(1.1750);">0</div>
<div class="t" style="left:1335.17px;top:441.83px;font-size:16.5px;line-height:16.5px;font-weight:400;color:#909090;letter-spacing:0px;transform:scaleX(0.9277);">Ready</div>
<div class="t" style="left:201.41px;top:519.43px;font-size:16.5px;line-height:16.5px;font-weight:400;color:#2b2b2b;letter-spacing:0px;transform:scaleX(1.0899);-webkit-text-stroke:0.7px #2b2b2b;">Kaltura-Streaming-Platform-Woman-Only (Source)</div>
<div class="t" style="left:828.41px;top:518.83px;font-size:16.5px;line-height:16.5px;font-weight:400;color:#909090;letter-spacing:0px;transform:scaleX(0.9937);">0_87fapjck</div>
<div class="t" style="left:1014.95px;top:518.83px;font-size:16.5px;line-height:16.5px;font-weight:400;color:#909090;letter-spacing:0px;transform:scaleX(1.0535);">06/26/2025 08:37</div>
<div class="t" style="left:1169.55px;top:518.83px;font-size:16.5px;line-height:16.5px;font-weight:400;color:#909090;letter-spacing:0px;transform:scaleX(1.0500);">00:51</div>
<div class="t" style="left:1257.23px;top:521.43px;font-size:16.5px;line-height:16.5px;font-weight:400;color:#909090;letter-spacing:0px;transform:scaleX(1.1750);">0</div>
<div class="t" style="left:1335.17px;top:518.83px;font-size:16.5px;line-height:16.5px;font-weight:400;color:#909090;letter-spacing:0px;transform:scaleX(0.9277);">Ready</div>
<div class="t" style="left:198.30px;top:596.43px;font-size:16.5px;line-height:16.5px;font-weight:400;color:#2b2b2b;letter-spacing:0px;transform:scaleX(0.9838);-webkit-text-stroke:0.7px #2b2b2b;">The Shifting Baseline Syndrome</div>
<div class="t" style="left:828.43px;top:595.83px;font-size:16.5px;line-height:16.5px;font-weight:400;color:#909090;letter-spacing:0px;transform:scaleX(0.9718);">0_aeugh4ip</div>
<div class="t" style="left:1014.95px;top:595.83px;font-size:16.5px;line-height:16.5px;font-weight:400;color:#909090;letter-spacing:0px;transform:scaleX(1.0535);">06/25/2025 16:42</div>
<div class="t" style="left:1169.55px;top:595.83px;font-size:16.5px;line-height:16.5px;font-weight:400;color:#909090;letter-spacing:0px;transform:scaleX(1.0500);">00:56</div>
<div class="t" style="left:1257.23px;top:598.43px;font-size:16.5px;line-height:16.5px;font-weight:400;color:#909090;letter-spacing:0px;transform:scaleX(1.1750);">0</div>
<div class="t" style="left:1335.17px;top:595.83px;font-size:16.5px;line-height:16.5px;font-weight:400;color:#909090;letter-spacing:0px;transform:scaleX(0.9277);">Ready</div>
<div class="t" style="left:197.29px;top:673.43px;font-size:16.5px;line-height:16.5px;font-weight:400;color:#2b2b2b;letter-spacing:0px;transform:scaleX(1.0084);-webkit-text-stroke:0.7px #2b2b2b;">Marine Conservation: From Protected Areas to Species Extinction</div>
<div class="t" style="left:828.37px;top:672.83px;font-size:16.5px;line-height:16.5px;font-weight:400;color:#909090;letter-spacing:0px;transform:scaleX(1.0333);">0_ol35r147</div>
<div class="t" style="left:1014.95px;top:672.83px;font-size:16.5px;line-height:16.5px;font-weight:400;color:#909090;letter-spacing:0px;transform:scaleX(1.0535);">06/25/2025 16:31</div>
<div class="t" style="left:1169.55px;top:672.83px;font-size:16.5px;line-height:16.5px;font-weight:400;color:#909090;letter-spacing:0px;transform:scaleX(1.0500);">01:56</div>
<div class="t" style="left:1257.23px;top:675.43px;font-size:16.5px;line-height:16.5px;font-weight:400;color:#909090;letter-spacing:0px;transform:scaleX(1.1750);">0</div>
<div class="t" style="left:1335.17px;top:672.83px;font-size:16.5px;line-height:16.5px;font-weight:400;color:#909090;letter-spacing:0px;transform:scaleX(0.9277);">Ready</div>
<div class="t" style="left:1494.49px;top:291.20px;font-size:15px;line-height:15px;font-weight:700;color:#c8c8c8;letter-spacing:0px;transform:scaleX(1.0112);">Create with AI</div>
<div class="t" style="left:1494.49px;top:368.20px;font-size:15px;line-height:15px;font-weight:700;color:#ffffff;letter-spacing:0px;transform:scaleX(1.0112);">Create with AI</div>
<div class="t" style="left:1494.49px;top:445.20px;font-size:15px;line-height:15px;font-weight:700;color:#ffffff;letter-spacing:0px;transform:scaleX(1.0112);">Create with AI</div>
<div class="t" style="left:1494.49px;top:522.20px;font-size:15px;line-height:15px;font-weight:700;color:#c8c8c8;letter-spacing:0px;transform:scaleX(1.0112);">Create with AI</div>
<div class="t" style="left:1494.49px;top:599.20px;font-size:15px;line-height:15px;font-weight:700;color:#c8c8c8;letter-spacing:0px;transform:scaleX(1.0112);">Create with AI</div>
<div class="t" style="left:1494.49px;top:676.20px;font-size:15px;line-height:15px;font-weight:700;color:#ffffff;letter-spacing:0px;transform:scaleX(1.0112);">Create with AI</div>
<div class="t" style="left:1466.30px;top:563.66px;font-size:16px;line-height:16px;font-weight:400;color:#0052cc;letter-spacing:0px;transform:scaleX(0.9911);z-index:11;-webkit-text-stroke:0.7px #0052cc;">Share &amp; Embed</div>
<div class="t" style="left:1466.30px;top:598.66px;font-size:16px;line-height:16px;font-weight:400;color:#2b2b2b;letter-spacing:0px;transform:scaleX(1.0557);z-index:11;-webkit-text-stroke:0.7px #2b2b2b;">View Details</div>
<div class="t" style="left:1466.30px;top:633.56px;font-size:16px;line-height:16px;font-weight:400;color:#2b2b2b;letter-spacing:0px;transform:scaleX(1.0219);z-index:11;-webkit-text-stroke:0.7px #2b2b2b;">Captions &amp; Enrich</div>
<div class="t" style="left:1465.21px;top:668.46px;font-size:16px;line-height:16px;font-weight:400;color:#d9202e;letter-spacing:0px;transform:scaleX(1.0867);z-index:11;-webkit-text-stroke:0.7px #d9202e;">Delete</div>
<svg class="a" style="left:1598px;top:564px;z-index:12" width="28" height="32" viewBox="0 0 28 32"><path d="M9.1 18.6 V6 C9.1 3.6 12.5 3.6 12.5 6 V10.6 C12.5 9.2 15.5 9.2 15.5 10.6 V11.2 C15.5 9.8 18.5 9.8 18.5 11.2 V12 C18.5 10.6 22 10.6 22 12.2 V20.5 C22 25 18.6 27.6 14.4 27.6 C11.2 27.6 9.4 26 7.6 23.8 L4.2 19.6 C3.2 18.4 4.6 16.4 6.4 17.2 Z" fill="#fff" stroke="#141420" stroke-width="1.3" stroke-linejoin="round"/><g stroke="#141420" stroke-width="1.2"><line x1="12.5" y1="10.4" x2="12.5" y2="15"/><line x1="15.5" y1="10.8" x2="15.5" y2="15"/><line x1="18.5" y1="11.6" x2="18.5" y2="15"/></g></svg>
</body></html>
